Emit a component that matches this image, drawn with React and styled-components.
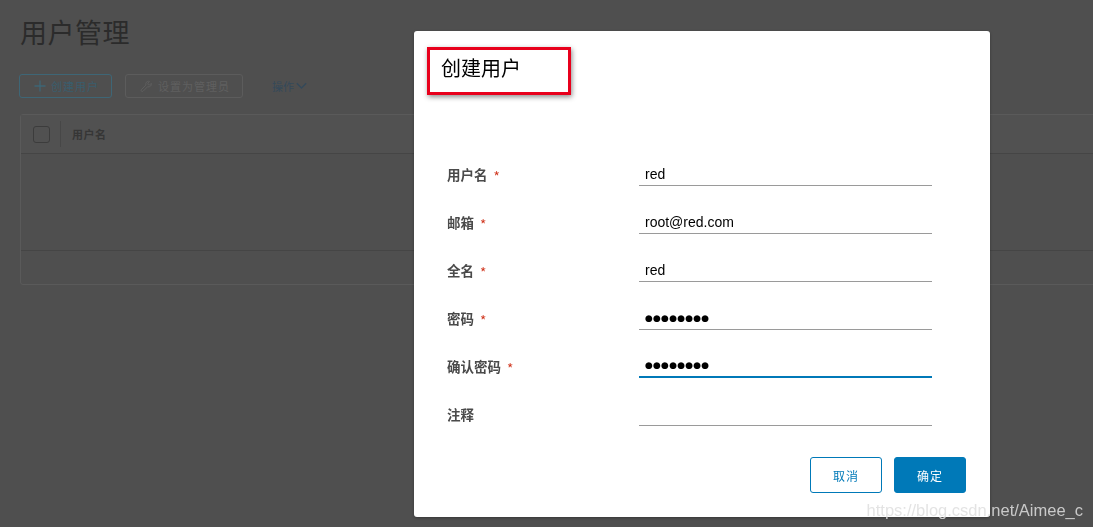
import React from "react";
import styled, { createGlobalStyle } from "styled-components";

const GlobalStyle = createGlobalStyle`
  html, body {
    margin: 0;
    padding: 0;
    background: #4f4f4f;
    font-family: "Noto Sans CJK SC", "Liberation Sans", sans-serif;
  }
`;

const Page = styled.div`
  width: 1093px;
  height: 527px;
  overflow: hidden;
  padding: 12px 0 0 20px;
  box-sizing: border-box;
  background: #4f4f4f;
`;

const PageTitle = styled.h1`
  margin: 0;
  font-size: 27px;
  font-weight: 400;
  line-height: 40px;
  color: #2b2b2b;
  letter-spacing: 0.5px;
`;

const Toolbar = styled.div`
  display: flex;
  align-items: center;
  margin-top: 22px;
  margin-left: -1px;
`;

const ToolButton = styled.div`
  display: flex;
  align-items: center;
  gap: 5px;
  height: 24px;
  box-sizing: border-box;
  padding: 0 12px 0 14px;
  margin-right: 13px;
  border: 1px solid ${(p) => (p.disabled ? "#5c5c5c" : "#3e6676")};
  border-radius: 3px;
  font-size: 11px;
  letter-spacing: 1px;
  color: ${(p) => (p.disabled ? "#606060" : "#3a5d6d")};
`;

const MenuLink = styled.div`
  display: flex;
  align-items: center;
  gap: 2px;
  margin-left: 16px;
  font-size: 11px;
  color: #34495a;
`;

const Table = styled.div`
  margin-top: 16px;
  width: 1080px;
  border: 1px solid #5a5a5a;
  border-radius: 3px;
`;

const TableHead = styled.div`
  display: flex;
  align-items: center;
  height: 38px;
  border-bottom: 1px solid #454545;
  background: #515151;
`;

const CheckBox = styled.div`
  width: 15px;
  height: 15px;
  border: 1px solid #3c3c3c;
  border-radius: 3px;
  margin-left: 12px;
`;

const HeadDivider = styled.div`
  width: 1px;
  height: 26px;
  background: #474747;
  margin: 0 11px 0 10px;
`;

const HeadCell = styled.div`
  font-size: 11px;
  font-weight: 700;
  letter-spacing: 0.5px;
  color: #363636;
`;

const TableBody = styled.div`
  height: 96px;
  border-bottom: 1px solid #454545;
`;

const TableFoot = styled.div`
  height: 33px;
`;

const Backdrop = styled.div`
  position: fixed;
  inset: 0;
  padding: 31px 0 0 414px;
`;

const Modal = styled.div`
  width: 576px;
  height: 486px;
  box-sizing: border-box;
  background: #fff;
  border-radius: 3px;
  box-shadow: 0 1px 3px rgba(0, 0, 0, 0.3);
  padding: 16px 24px 24px 13px;
  display: flex;
  flex-direction: column;
`;

const TitleMark = styled.div`
  width: 144px;
  height: 48px;
  box-sizing: border-box;
  border: 3px solid #e8001c;
  box-shadow: 1px 2px 5px rgba(0, 0, 0, 0.45);
  padding: 3px 0 0 11px;
`;

const ModalTitle = styled.h2`
  margin: 0;
  font-size: 20px;
  font-weight: 400;
  line-height: 30px;
  color: #000;
`;

const Form = styled.div`
  margin-top: 67px;
  padding-left: 20px;
  display: flex;
  flex-direction: column;
  gap: 24px;
`;

const Row = styled.div`
  display: grid;
  grid-template-columns: 192px 293px;
  align-items: end;
  height: 24px;
`;

const Label = styled.label`
  font-size: 13.5px;
  font-weight: 700;
  color: #4a4a4a;
  line-height: 24px;
  height: 24px;
  align-self: start;
`;

const Star = styled.span`
  display: inline-block;
  color: #d0341c;
  margin-left: 6px;
  font-weight: 400;
  transform: translateY(2px);
`;

const Field = styled.input`
  width: 100%;
  height: 24px;
  box-sizing: border-box;
  border: none;
  border-bottom: ${(p) => (p.focused ? "2px solid #0079b8" : "1px solid #9a9a9a")};
  outline: none;
  padding: 0 6px;
  font-family: ${(p) => (p.dots ? '"DejaVu Sans", sans-serif' : '"Liberation Sans", sans-serif')};
  font-size: ${(p) => (p.dots ? "9px" : "14px")};
  letter-spacing: ${(p) => (p.dots ? "0.2px" : "0")};
  color: #000;
  background: transparent;
`;

const Actions = styled.div`
  margin-top: auto;
  display: flex;
  justify-content: flex-end;
  gap: 12px;
`;

const Btn = styled.button`
  width: 72px;
  height: 36px;
  border-radius: 3px;
  border: 1px solid #0079b8;
  background: ${(p) => (p.primary ? "#0079b8" : "#fff")};
  color: ${(p) => (p.primary ? "#fff" : "#0079b8")};
  font-family: "Noto Sans CJK SC", sans-serif;
  font-size: 12px;
  letter-spacing: 1px;
  cursor: pointer;
`;

const Watermark = styled.div`
  position: fixed;
  right: 10px;
  bottom: 7px;
  font-family: "Liberation Sans", sans-serif;
  font-size: 16.5px;
  color: rgba(222, 222, 222, 0.85);
`;

const fields = [
  { label: "用户名", required: true, value: "red" },
  { label: "邮箱", required: true, value: "root@red.com" },
  { label: "全名", required: true, value: "red" },
  { label: "密码", required: true, value: "●●●●●●●●", dots: true },
  { label: "确认密码", required: true, value: "●●●●●●●●", dots: true, focused: true },
  { label: "注释", required: false, value: "" },
];

function Plus() {
  return (
    <svg width="12" height="12" viewBox="0 0 12 12">
      <path d="M6 0.5v11M0.5 6h11" stroke="#3e6676" strokeWidth="1.3" fill="none" />
    </svg>
  );
}

function Wrench() {
  return (
    <svg width="13" height="13" viewBox="0 0 16 16">
      <path
        d="M10.5 1.5a3.5 3.5 0 0 0-3.2 4.8L1.8 11.8a1.4 1.4 0 0 0 2 2l5.5-5.5a3.5 3.5 0 0 0 4.6-4.2l-2 2-1.8-.4-.4-1.8 2-2a3.5 3.5 0 0 0-1.2-.4z"
        stroke="#606060"
        strokeWidth="1.1"
        fill="none"
      />
    </svg>
  );
}

function Chevron() {
  return (
    <svg width="11" height="8" viewBox="0 0 11 8">
      <path d="M0.8 1.2l4.7 4.8 4.7-4.8" stroke="#34495a" strokeWidth="1.4" fill="none" />
    </svg>
  );
}

export default function App() {
  return (
    <>
      <GlobalStyle />
      <Page>
        <PageTitle>用户管理</PageTitle>
        <Toolbar>
          <ToolButton>
            <Plus />
            创建用户
          </ToolButton>
          <ToolButton disabled>
            <Wrench />
            设置为管理员
          </ToolButton>
          <MenuLink>
            操作
            <Chevron />
          </MenuLink>
        </Toolbar>
        <Table>
          <TableHead>
            <CheckBox />
            <HeadDivider />
            <HeadCell>用户名</HeadCell>
          </TableHead>
          <TableBody />
          <TableFoot />
        </Table>
      </Page>
      <Backdrop>
        <Modal>
          <TitleMark>
            <ModalTitle>创建用户</ModalTitle>
          </TitleMark>
          <Form>
            {fields.map((f) => (
              <Row key={f.label}>
                <Label>
                  {f.label}
                  {f.required && <Star>*</Star>}
                </Label>
                <Field readOnly value={f.value} dots={f.dots} focused={f.focused} />
              </Row>
            ))}
          </Form>
          <Actions>
            <Btn>取消</Btn>
            <Btn primary>确定</Btn>
          </Actions>
        </Modal>
      </Backdrop>
      <Watermark>https://blog.csdn.net/Aimee_c</Watermark>
    </>
  );
}
